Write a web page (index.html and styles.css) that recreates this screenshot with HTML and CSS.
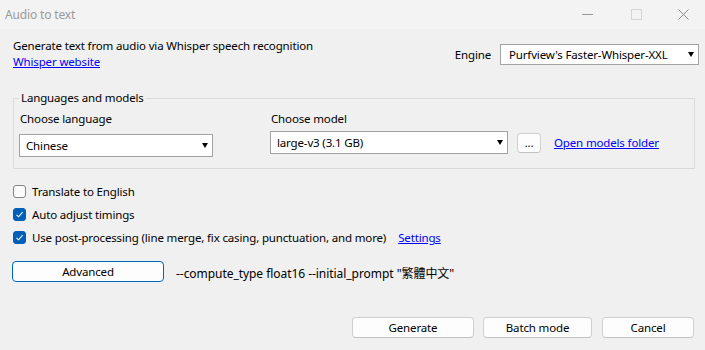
FILE: index.html
```html
<!DOCTYPE html>
<html lang="en">
<head>
    <meta charset="UTF-8">
    <title>Audio to text</title>
    <link rel="stylesheet" href="styles.css">
</head>
<body>
    <div id="window">
        <div class="titlebar">
            <span class="title">Audio to text</span>
            <div class="controls">
                <span class="ctl-min"></span>
                <span class="ctl-max"></span>
                <svg class="ctl-close" width="11" height="11" viewBox="0 0 11 11">
                    <path d="M0.5 0.5 L10.5 10.5 M10.5 0.5 L0.5 10.5" stroke="#8a8a8a" stroke-width="1"/>
                </svg>
            </div>
        </div>

        <div class="top">
            <div class="intro">
                <div class="line">Generate text from audio via Whisper speech recognition</div>
                <a class="link line" href="#">Whisper website</a>
            </div>
            <div class="engine">
                <span class="label">Engine</span>
                <div class="combo combo-engine">
                    <span>Purfview's Faster-Whisper-XXL</span>
                    <span class="arrow"></span>
                </div>
            </div>
        </div>

        <fieldset class="group">
            <legend>Languages and models</legend>
            <div class="cols">
                <div class="col-lang">
                    <div class="caption">Choose language</div>
                    <div class="combo combo-lang">
                        <span>Chinese</span>
                        <span class="arrow"></span>
                    </div>
                </div>
                <div class="col-model">
                    <div class="caption">Choose model</div>
                    <div class="model-row">
                        <div class="combo combo-model">
                            <span>large-v3 (3.1 GB)</span>
                            <span class="arrow"></span>
                        </div>
                        <button class="btn btn-dots">...</button>
                        <a class="link" href="#">Open models folder</a>
                    </div>
                </div>
            </div>
        </fieldset>

        <div class="checks">
            <div class="check">
                <span class="box"></span>
                <span>Translate to English</span>
            </div>
            <div class="check">
                <span class="box on">
                    <svg width="9" height="9" viewBox="0 0 9 9"><path d="M1.5 4.8 L3.6 6.8 L7.6 2.2" fill="none" stroke="#fff" stroke-width="1.1"/></svg>
                </span>
                <span>Auto adjust timings</span>
            </div>
            <div class="check">
                <span class="box on">
                    <svg width="9" height="9" viewBox="0 0 9 9"><path d="M1.5 4.8 L3.6 6.8 L7.6 2.2" fill="none" stroke="#fff" stroke-width="1.1"/></svg>
                </span>
                <span>Use post-processing (line merge, fix casing, punctuation, and more)</span>
                <a class="link settings" href="#">Settings</a>
            </div>
        </div>

        <div class="advanced">
            <button class="btn btn-advanced">Advanced</button>
            <span class="params">--compute_type float16 --initial_prompt "繁體中文"</span>
        </div>

        <div class="actions">
            <button class="btn btn-generate">Generate</button>
            <button class="btn btn-batch">Batch mode</button>
            <button class="btn btn-cancel">Cancel</button>
        </div>
    </div>
</body>
</html>
```

FILE: styles.css
```css
body {
    margin: 0;
    padding: 0;
    background: #f0f0f0;
    font-family: "Noto Sans", "Noto Sans CJK TC", sans-serif;
    font-size: 11.5px;
    letter-spacing: -0.15px;
    color: #000;
}

#window {
    width: 705px;
    height: 350px;
    overflow: hidden;
}

.titlebar {
    height: 29px;
    display: flex;
    align-items: center;
    justify-content: space-between;
    background: #f3f3f3;
}

.title {
    padding-left: 5px;
    color: #9a9a9a;
    font-size: 12px;
}

.controls {
    display: flex;
    align-items: center;
    height: 100%;
}

.ctl-min {
    width: 11px;
    height: 1px;
    background: #9a9a9a;
    margin-right: 38px;
}

.ctl-max {
    width: 9px;
    height: 9px;
    border: 1px solid #d4d4d4;
    margin-right: 36px;
}

.ctl-close {
    margin-right: 16px;
}

/* header row */
.top {
    display: flex;
    justify-content: space-between;
    padding: 9px 6px 0 13px;
}

.line {
    display: block;
    line-height: 16px;
}

.link {
    color: #0000ff;
    text-decoration: underline;
}

.engine {
    display: flex;
    align-items: center;
}

.engine .label {
    margin-right: 9px;
}

.combo {
    box-sizing: border-box;
    display: flex;
    align-items: center;
    justify-content: space-between;
    background: #fff;
    border: 1px solid #a2a2a2;
    padding: 0 4px 0 6px;
}

.arrow {
    width: 0;
    height: 0;
    border-left: 3.5px solid transparent;
    border-right: 3.5px solid transparent;
    border-top: 5px solid #000;
}

.combo-engine {
    width: 199px;
    height: 21px;
    padding-left: 8px;
}

/* group box */
.group {
    margin: 20px 0 0 13px;
    width: 682px;
    box-sizing: border-box;
    border: 1px solid #dadada;
    padding: 5px 6px 11px 5px;
}

.group legend {
    padding: 0 2px;
    line-height: 16px;
}

.cols {
    display: flex;
}

.caption {
    line-height: 16px;
    padding-left: 1px;
}

.col-lang {
    width: 251px;
}

.combo-lang {
    margin-top: 7px;
    width: 194px;
    height: 23px;
}

.model-row {
    display: flex;
    align-items: center;
    margin-top: 4px;
}

.combo-model {
    width: 238px;
    height: 23px;
}

.btn {
    box-sizing: border-box;
    font-family: inherit;
    font-size: 11.5px;
    letter-spacing: -0.15px;
    color: #000;
    background: #fdfdfd;
    border: 1px solid #d0d0d0;
    border-bottom-color: #c2c2c2;
    border-radius: 4px;
    padding: 0;
    height: 21px;
}

.btn-dots {
    width: 24px;
    height: 20px;
    margin-left: 9px;
    margin-right: 13px;
    font-size: 11px;
}

/* checkboxes */
.checks {
    margin: 11px 0 0 13px;
}

.check {
    display: flex;
    align-items: center;
    height: 23px;
}

.box {
    box-sizing: border-box;
    width: 13px;
    height: 13px;
    border: 1px solid #858585;
    border-radius: 3px;
    background: #fbfbfb;
    margin-right: 6px;
    display: flex;
    align-items: center;
    justify-content: center;
}

.box.on {
    background: #005fb8;
    border-color: #005fb8;
}

.settings {
    margin-left: 12px;
}

/* advanced */
.advanced {
    display: flex;
    align-items: center;
    height: 21px;
    margin: 12px 0 0 12px;
}

.btn-advanced {
    width: 152px;
    border: 1px solid #0067c0;
    background: #fdfdfd;
    margin-right: 12px;
}

.params {
    margin-top: 4px;
    line-height: 16px;
    font-size: 12px;
    letter-spacing: -0.05px;
}

/* bottom buttons */
.actions {
    display: flex;
    justify-content: flex-end;
    margin: 35px 11px 0 0;
}

.btn-generate {
    width: 122px;
}

.btn-batch {
    width: 109px;
    margin-left: 9px;
}

.btn-cancel {
    width: 92px;
    margin-left: 10px;
}
```
